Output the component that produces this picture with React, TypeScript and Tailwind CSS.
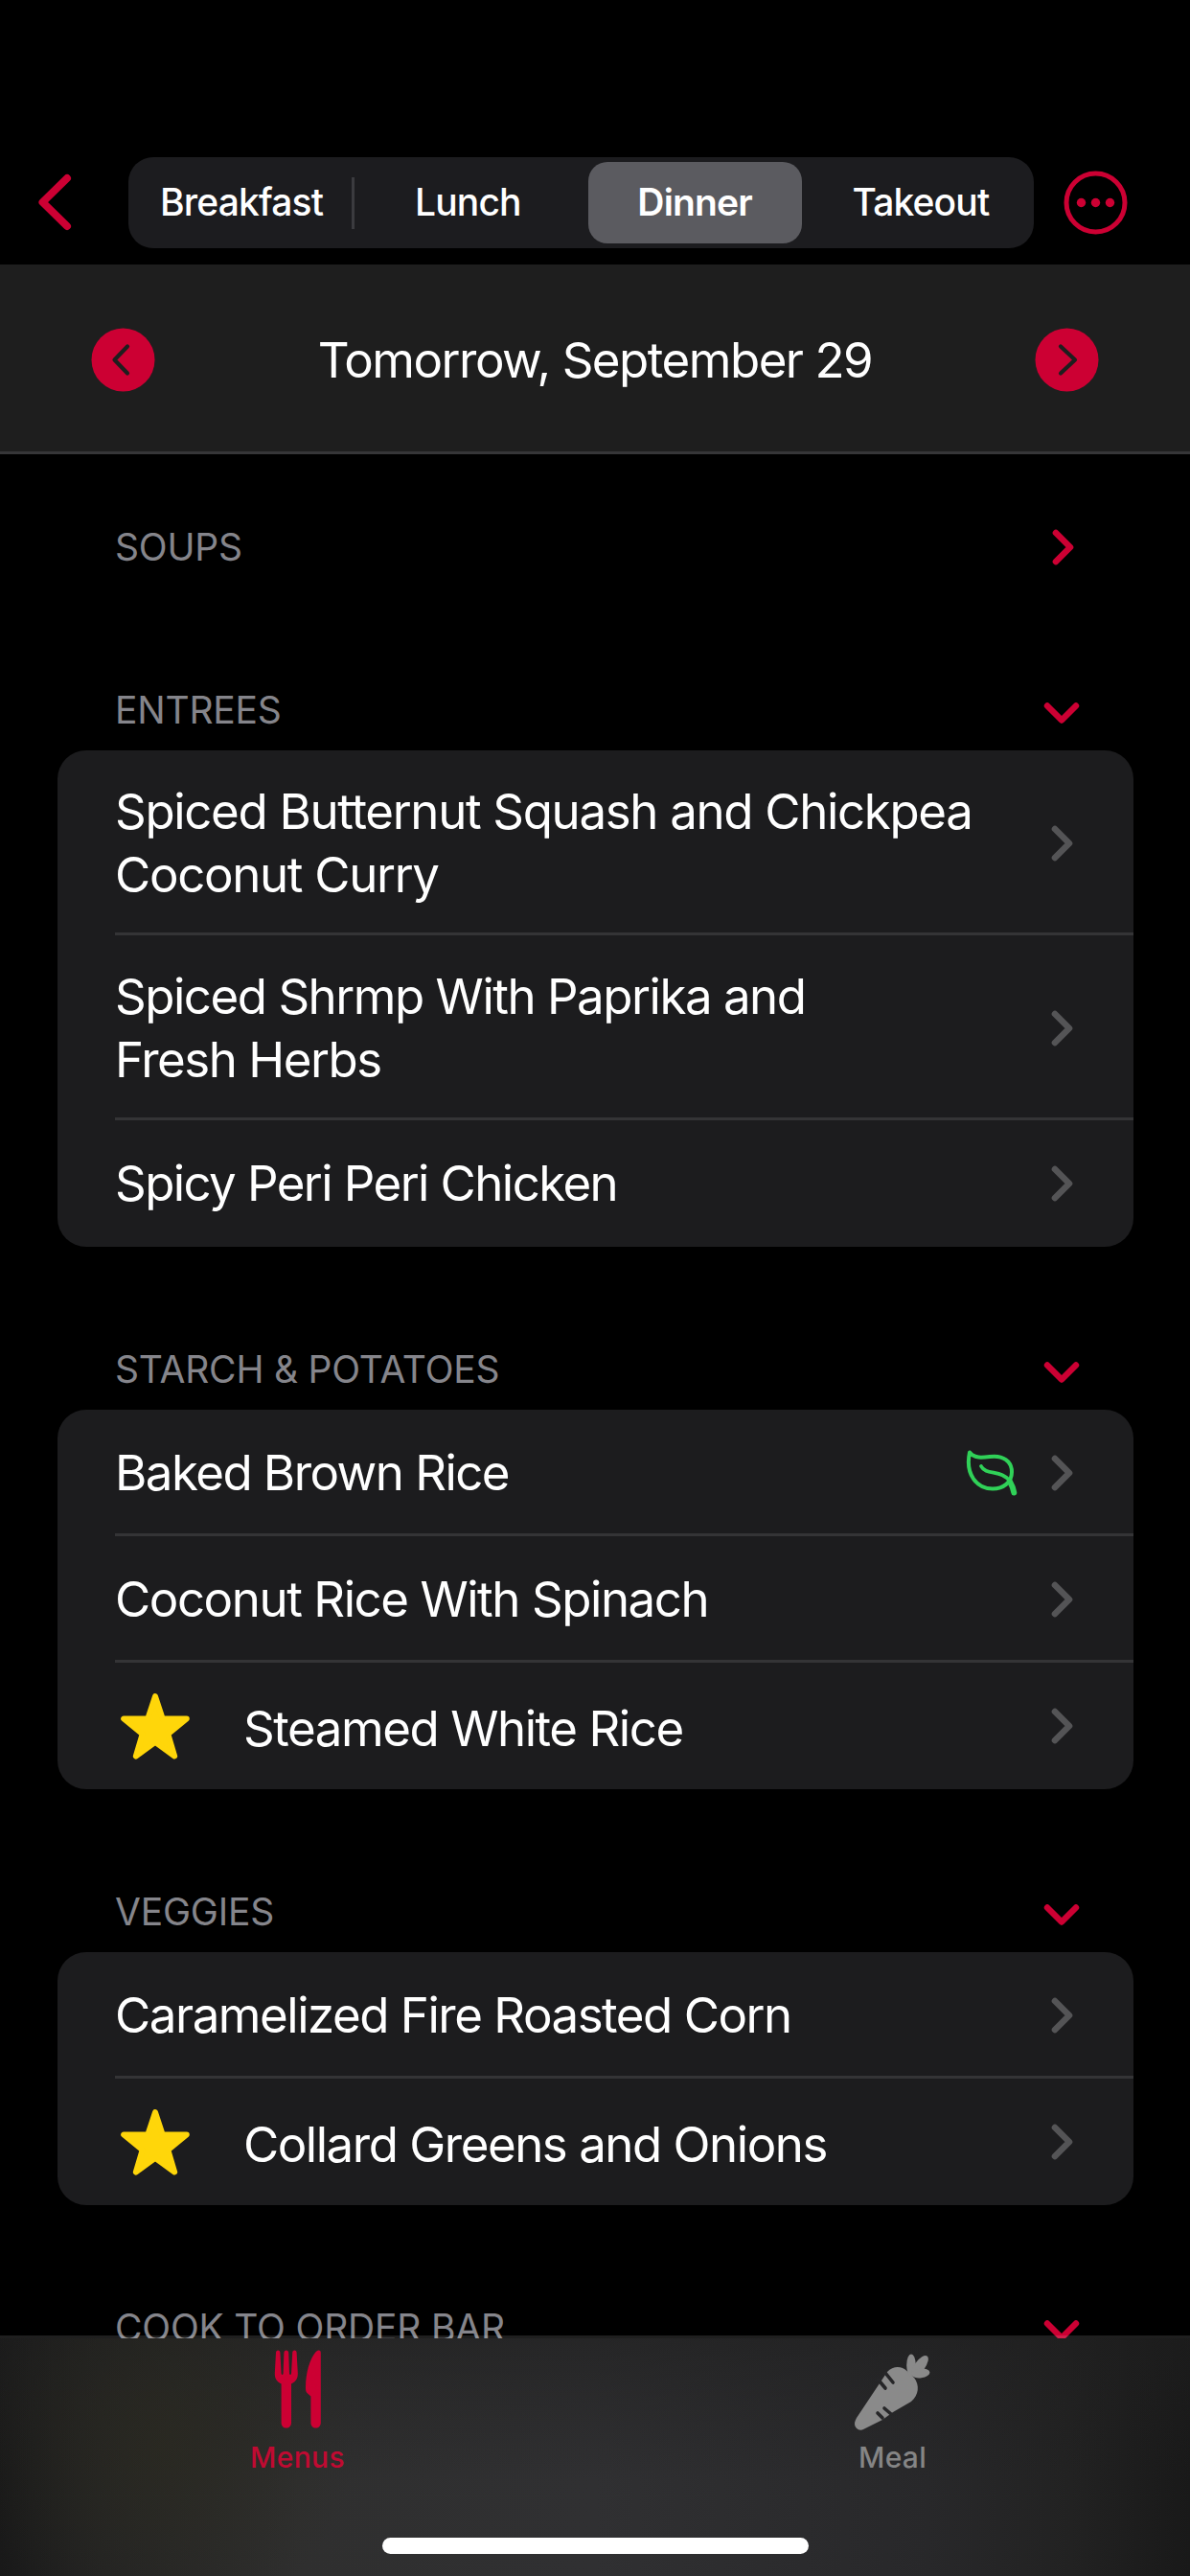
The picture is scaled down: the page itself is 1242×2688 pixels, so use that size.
import React from "react";

type Item = { name: string; star?: boolean; leaf?: boolean; tall?: boolean; text: string };
type Group = { title: string; items: Item[] };

const groups: Group[] = [
  {
    title: "ENTREES",
    items: [
      { name: "Spiced Butternut Squash and Chickpea Coconut Curry", tall: true, text: "w-[920px] tracking-[-1.33px]" },
      { name: "Spiced Shrmp With Paprika and Fresh Herbs", tall: true, text: "w-[760px] tracking-[-1.48px]" },
      { name: "Spicy Peri Peri Chicken", text: "tracking-[-1.58px]" },
    ],
  },
  {
    title: "STARCH & POTATOES",
    items: [
      { name: "Baked Brown Rice", leaf: true, text: "tracking-[-1.55px]" },
      { name: "Coconut Rice With Spinach", text: "tracking-[-1.45px]" },
      { name: "Steamed White Rice", star: true, text: "tracking-[-1.45px]" },
    ],
  },
  {
    title: "VEGGIES",
    items: [
      { name: "Caramelized Fire Roasted Corn", text: "tracking-[-1.48px]" },
      { name: "Collard Greens and Onions", star: true, text: "tracking-[-1.48px]" },
    ],
  },
];

function ChevronRight({ className }: { className: string }) {
  return (
    <svg className={className} width="23" height="38" viewBox="0 0 23 38" fill="none" stroke="currentColor" strokeWidth="6.6" strokeLinecap="round" strokeLinejoin="round">
      <path d="M4 4L19 19L4 34" />
    </svg>
  );
}

function ChevronDown() {
  return (
    <svg className="text-[#cc0033]" width="38" height="24" viewBox="0 0 38 24" fill="none" stroke="currentColor" strokeWidth="6.4" strokeLinecap="round" strokeLinejoin="round">
      <path d="M4 4.5L19 19.5L34 4.5" />
    </svg>
  );
}

function Leaf() {
  return (
    <svg width="54" height="48" viewBox="0 0 54 48" fill="none" stroke="#30d158" strokeWidth="4" strokeLinecap="round" strokeLinejoin="round">
      <path d="M4 2.500C9 9 17 8 25 7C39 5 48 12 48 23C48 34 39 40.500 28 40.500C12 40.500 -1 26 4 2.500Z" />
      <path d="M16 17C21 27 38 20 46 33" strokeWidth="3.8" />
      <path d="M46 33C48 36.500 49.500 40 50.300 44.500" strokeWidth="6" />
    </svg>
  );
}

function Star() {
  return (
    <svg width="72" height="69" viewBox="0 0 72 69" fill="#ffd60a" stroke="#ffd60a" strokeWidth="6" strokeLinejoin="round">
      <path d="M36 3.200L43.700 26.500H68.800L49.300 42.400L56.200 65.500L36 50.800L15.800 65.500L22.700 42.400L3.200 26.500H28.300Z" />
    </svg>
  );
}

function Utensils() {
  return (
    <svg width="50" height="82" viewBox="0 0 50 82" fill="#cc0033">
      <path d="M2 3C2 1.500 3 0.500 4.200 0.500S6.400 1.500 6.400 3L7.600 25Q8.500 27 9.600 25L10.400 3C10.500 1.500 11.500 0.500 12.800 0.500S15.100 1.500 15.200 3L16 25Q17 27 18 25L19.200 3C19.300 1.500 20 0.500 21.400 0.500S23.600 1.500 23.600 3L24.800 24C25 30 23 33 18 35.500V76C18 79.500 15.800 81.500 12.800 81.500S7.600 79.500 7.600 76V35.500C2.600 33 0.600 30 0.800 24Z" />
      <path d="M48.800 3V76C48.800 79.500 46.600 81.500 43.600 81.500S38.400 79.500 38.400 76V48.500L34.500 45C33 43.500 33 42 33 39C33 24 37.500 9 43.500 2.200C46 -0.300 48.800 0 48.800 3Z" />
    </svg>
  );
}

function Carrot() {
  return (
    <svg width="82" height="82" viewBox="0 0 82 82" fill="#8a8a8a">
      <path d="M35 19C41 12.500 50 12.500 55.500 18L63 25C69 33 68 43 60 50L41 61L30 69L10 79C6 81 1 78 1 73C1 71 2 69 3 67L27 31Z" />
      <ellipse cx="60" cy="12" rx="4.800" ry="11.500" />
      <ellipse cx="69" cy="13" rx="5.500" ry="13" transform="rotate(36 69 13)" />
      <ellipse cx="70" cy="20.500" rx="9.500" ry="4.800" transform="rotate(-8 70 20.500)" />
      <g stroke="#262628" strokeWidth="3.600" strokeLinecap="round">
        <path d="M33 20L41 30M25.500 27L33 36M32 57L39 63M25 62L30 67" />
      </g>
    </svg>
  );
}

function Row({ item, last }: { item: Item; last: boolean }) {
  return (
    <div className={`pl-[60px] ${item.tall ? "h-[193px]" : "h-[132px]"}`}>
      <div className={`flex h-full items-center pr-[63px] ${last ? "" : "border-b-[3px] border-[#343436] pt-[3px]"}`}>
        {item.star && (
          <div className="mr-[56px] ml-[6px]">
            <Star />
          </div>
        )}
        <div className={`text-[51px] leading-[66px] ${item.text} ${item.star ? "pt-[6px]" : ""}`}>{item.name}</div>
        <div className="ml-auto flex shrink-0 items-center gap-[35px]">
          {item.leaf && <Leaf />}
          <ChevronRight className="text-[#545456]" />
        </div>
      </div>
    </div>
  );
}

function Header({ title, open }: { title: string; open: boolean }) {
  return (
    <div className="flex h-[170px] items-end justify-between pr-[115px] pb-[19px] pl-[120px]">
      <span className="text-[39px] leading-[46px] tracking-[-0.2px] text-[#85858b]">{title}</span>
      <div className={`flex justify-center ${open ? "mb-2" : "mr-[6px] mb-1"}`}>
        {open ? <ChevronDown /> : <ChevronRight className="text-[#cc0033]" />}
      </div>
    </div>
  );
}

export default function App() {
  return (
    <div className="relative flex h-[2688px] w-[1242px] flex-col overflow-hidden bg-black font-['Inter',sans-serif] text-white">
      <header className="flex h-[276px] shrink-0 items-end pb-[17px]">
        <div className="flex h-[95px] w-[134px] items-center pb-[2px] pl-[39px]">
          <svg width="36" height="60" viewBox="0 0 36 60" fill="none" stroke="#cc0033" strokeWidth="8" strokeLinecap="round" strokeLinejoin="round">
            <path d="M31 5L5.500 30L31 55" />
          </svg>
        </div>
        <div className="grid h-[95px] w-[945px] grid-cols-4 items-center rounded-[26px] bg-[#1c1c1f] text-center text-[39px] font-medium tracking-[-0.85px]">
          <div className="flex h-[54px] items-center justify-center border-r-[3px] border-[#3b3b3f] pl-[3px]">Breakfast</div>
          <div>Lunch</div>
          <div className="mr-[6px] ml-[7px] flex h-[85px] items-center justify-center rounded-[20px] bg-[#5b5b60] font-semibold">Dinner</div>
          <div>Takeout</div>
        </div>
        <div className="flex h-[95px] items-center pl-[31px]">
          <svg width="67" height="67" viewBox="0 0 67 67" fill="#cc0033">
            <circle cx="33.500" cy="33.500" r="30.500" fill="none" stroke="#cc0033" strokeWidth="5" />
            <circle cx="18.500" cy="33.500" r="4.700" />
            <circle cx="33.500" cy="33.500" r="4.700" />
            <circle cx="48.500" cy="33.500" r="4.700" />
          </svg>
        </div>
      </header>

      <div className="flex h-[198px] shrink-0 items-center justify-between border-b-[3px] border-[#363638] bg-[#1e1e1e] px-[95px] pt-[4px]">
        <svg width="67" height="67" viewBox="0 0 67 67" fill="none">
          <circle cx="33.500" cy="33.500" r="33" fill="#cc0033" />
          <path d="M38 19.500L24.500 33.500L38 47.500" stroke="#1e1e1e" strokeWidth="4.200" strokeLinecap="round" strokeLinejoin="round" />
        </svg>
        <div className="text-[51px] leading-[66px] tracking-[-1.5px]">Tomorrow, September 29</div>
        <svg width="67" height="67" viewBox="0 0 67 67" fill="none">
          <circle cx="33.500" cy="33.500" r="33" fill="#cc0033" />
          <path d="M27 19.500L42 33.500L27 47.500" stroke="#1e1e1e" strokeWidth="4.200" strokeLinecap="round" strokeLinejoin="round" />
        </svg>
      </div>

      <main className="-mt-[31px]">
        <Header title="SOUPS" open={false} />
        {groups.map((g) => (
          <section key={g.title}>
            <Header title={g.title} open />
            <div className="ml-[60px] w-[1123px] overflow-hidden rounded-[30px] bg-[#1c1c1e]">
              {g.items.map((it, i) => (
                <Row key={it.name} item={it} last={i === g.items.length - 1} />
              ))}
            </div>
          </section>
        ))}
        <Header title="COOK TO ORDER BAR" open />
      </main>

      <nav className="absolute bottom-0 left-0 flex h-[251px] w-full flex-col items-center border-t-[3px] border-white/12 bg-[radial-gradient(circle_at_170px_110px,#2b2a20b0_0px,#2b2a2000_200px),linear-gradient(180deg,#1e1e1e90_0%,#1e1e1e00_60%),linear-gradient(90deg,#191919_0%,#232323_8%,#2f2f2f_25%,#303032_50%,#28282a_78%,#222222_90%,#191919_100%)] bg-clip-padding">
        <div className="grid w-full grid-cols-2 text-[30px] leading-[36px] font-medium tracking-[0.3px]">
          <div className="flex flex-col items-center pt-[12px] text-[#c00a32]">
            <Utensils />
            <span className="mt-[12px]">Menus</span>
          </div>
          <div className="flex flex-col items-center pt-[16px] text-[#858585]">
            <Carrot />
            <span className="mt-[8px]">Meal</span>
          </div>
        </div>
        <div className="mt-auto mb-[23px] h-[17px] w-[445px] rounded-full bg-white" />
      </nav>
    </div>
  );
}
